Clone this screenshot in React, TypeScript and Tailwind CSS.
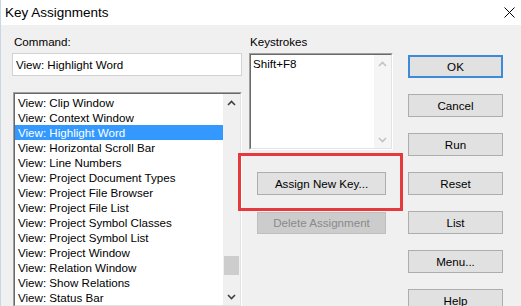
import React from "react";

const items = [
  "View: Clip Window",
  "View: Context Window",
  "View: Highlight Word",
  "View: Horizontal Scroll Bar",
  "View: Line Numbers",
  "View: Project Document Types",
  "View: Project File Browser",
  "View: Project File List",
  "View: Project Symbol Classes",
  "View: Project Symbol List",
  "View: Project Window",
  "View: Relation Window",
  "View: Show Relations",
  "View: Status Bar",
];

function Chevron({ up, color }: { up: boolean; color: string }) {
  return (
    <svg width="9" height="6" viewBox="0 0 9 6">
      {up ? (
        <path d="M1 5 L4.5 1.5 L8 5" fill="none" stroke={color} strokeWidth="1.6" />
      ) : (
        <path d="M1 1 L4.5 4.5 L8 1" fill="none" stroke={color} strokeWidth="1.6" />
      )}
    </svg>
  );
}

function Btn({ label, def }: { label: string; def?: boolean }) {
  return (
    <div
      className={
        "h-[23px] w-[95px] flex items-center justify-center bg-[#e1e1e1] text-black " +
        (def ? "border-2 border-[#3c8ad8]" : "border border-[#adadad]")
      }
    >
      {label}
    </div>
  );
}

export default function App() {
  return (
    <div className="relative w-[521px] h-[306px] overflow-hidden bg-[#f0f0f0] font-['Liberation_Sans',Arial,sans-serif] text-[11.6px] text-black border-l border-[#c9d6e3]">
      {/* title bar */}
      <div className="h-[25px] bg-white flex items-center justify-between pl-[4px] pr-[6px]">
        <span className="text-[13.5px] leading-[25px] font-['Liberation_Sans',sans-serif]">Key Assignments</span>
        <svg width="11" height="11" viewBox="0 0 11 11">
          <path d="M0.5 0.5 L10.5 10.5 M10.5 0.5 L0.5 10.5" stroke="#000" strokeWidth="1" />
        </svg>
      </div>

      {/* body */}
      <div className="flex pl-[11px] pt-[9px]">
        {/* left column */}
        <div className="w-[230px] flex flex-col">
          <div className="h-[15px] leading-[15px] pl-[2px]">Command:</div>
          <div className="mt-[4px] h-[23px] bg-white border border-[#d2d2d2] pl-[3px] leading-[21px]">
            View: Highlight Word
          </div>
          <div className="mt-[16px] ml-[1px] w-[229px] h-[215px] border-t border-l border-[#a0a0a0] border-r border-b border-r-white border-b-white">
            <div className="h-full border-t border-l border-[#696969] border-r border-b border-r-[#e3e3e3] border-b-[#e3e3e3] bg-white flex">
              <div className="flex-1 pt-[1px]">
                {items.map((t, i) => (
                  <div
                    key={t}
                    className={
                      "h-[15px] leading-[15px] pl-[3px] whitespace-nowrap " +
                      (i === 2 ? "bg-[#3399ff] text-white" : "")
                    }
                  >
                    {t}
                  </div>
                ))}
              </div>
              <div className="w-[17px] bg-[#f0f0f0] flex flex-col">
                <div className="h-[17px] flex items-center justify-center">
                  <Chevron up color="#404040" />
                </div>
                <div className="flex-1 flex flex-col">
                  <div className="mt-[145px] h-[19px] mx-[1px] bg-[#cdcdcd]" />
                </div>
                <div className="h-[17px] flex items-center justify-center">
                  <Chevron up={false} color="#404040" />
                </div>
              </div>
            </div>
          </div>
        </div>

        {/* middle column */}
        <div className="ml-[7px] w-[144px] flex flex-col">
          <div className="h-[15px] leading-[15px] pl-[1px]">Keystrokes</div>
          <div className="mt-[4px] h-[97px] border-t border-l border-[#a0a0a0] border-r border-b border-r-white border-b-white">
            <div className="h-full border-t border-l border-[#696969] border-r border-b border-r-[#e3e3e3] border-b-[#e3e3e3] bg-white flex">
              <div className="flex-1 pl-[2px] pt-[1px] leading-[15px]">Shift+F8</div>
              <div className="w-[17px] bg-[#f5f5f5] flex flex-col justify-between">
                <div className="h-[17px] flex items-center justify-center">
                  <Chevron up color="#c2c2c2" />
                </div>
                <div className="h-[17px] flex items-center justify-center">
                  <Chevron up={false} color="#c2c2c2" />
                </div>
              </div>
            </div>
          </div>
          <div className="mt-[22px] ml-[8px] w-[129px] h-[23px] bg-[#e1e1e1] border border-[#adadad] flex items-center justify-center">
            Assign New Key...
          </div>
          <div className="mt-[17px] ml-[8px] w-[129px] h-[22px] bg-[#cccccc] border border-[#bfbfbf] text-[#8a8a8a] flex items-center justify-center">
            Delete Assignment
          </div>
        </div>

        {/* right column */}
        <div className="ml-[15px] mt-[21px] flex flex-col gap-[16px]">
          <Btn label="OK" def />
          <Btn label="Cancel" />
          <Btn label="Run" />
          <Btn label="Reset" />
          <Btn label="List" />
          <Btn label="Menu..." />
          <Btn label="Help" />
        </div>
      </div>

      {/* red annotation rectangle */}
      <div className="absolute left-[237px] top-[153px] w-[165px] h-[58px] border-[3px] border-[#e5393b]" />
    </div>
  );
}
